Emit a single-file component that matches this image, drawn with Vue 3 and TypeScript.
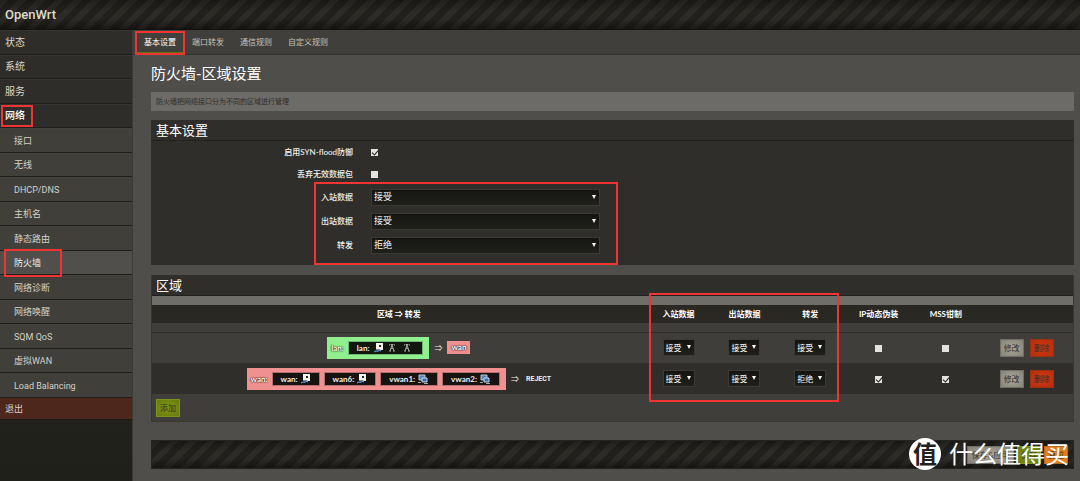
<script setup lang="ts">
import { ref } from 'vue'

interface Field { id: string; label: string; value: string }
interface Net { name: string; icons: string[] }
interface Zone {
  name: string
  kind: string
  nets: Net[]
  target: string
  badge: boolean
  policies: string[]
  masq: boolean
  mss: boolean
}

const topItems = ['状态', '系统', '服务', '网络']
const subItems = ['接口', '无线', 'DHCP/DNS', '主机名', '静态路由', '防火墙', '网络诊断', '网络唤醒', 'SQM QoS', '虚拟WAN', 'Load Balancing']
const tabs = ['基本设置', '端口转发', '通信规则', '自定义规则']
const options = ['接受', '拒绝', '丢弃']
const columns = ['入站数据', '出站数据', '转发']

const synFlood = ref(true)
const dropInvalid = ref(false)
const fields = ref<Field[]>([
  { id: 'input', label: '入站数据', value: '接受' },
  { id: 'output', label: '出站数据', value: '接受' },
  { id: 'forward', label: '转发', value: '拒绝' },
])
const zones = ref<Zone[]>([
  {
    name: 'lan', kind: 'lan', nets: [{ name: 'lan', icons: ['port', 'wifi', 'wifi'] }],
    target: 'wan', badge: true, policies: ['接受', '接受', '接受'], masq: false, mss: false,
  },
  {
    name: 'wan', kind: 'wan',
    nets: [
      { name: 'wan', icons: ['port'] },
      { name: 'wan6', icons: ['port'] },
      { name: 'vwan1', icons: ['vlan'] },
      { name: 'vwan2', icons: ['vlan'] },
    ],
    target: 'REJECT', badge: false, policies: ['接受', '接受', '拒绝'], masq: true, mss: true,
  },
])
</script>

<template>
  <div class="page">
    <header class="top"><a class="brand" href="#">OpenWrt</a></header>
    <div class="body">
      <nav class="side" aria-label="主菜单">
        <ul class="menu">
          <li v-for="t in topItems" :key="t" class="main-item">
            <a href="#" :class="{ marked: t === '网络' }">{{ t }}</a>
          </li>
          <li v-for="s in subItems" :key="s" class="sub-item" :class="{ current: s === '防火墙' }">
            <a href="#" :class="{ marked: s === '防火墙' }">{{ s }}</a>
          </li>
        </ul>
        <a class="logout" href="#">退出</a>
      </nav>

      <main class="main">
        <nav class="tabs" aria-label="防火墙">
          <a v-for="(t, i) in tabs" :key="t" href="#" :class="{ active: i === 0 }">{{ t }}</a>
        </nav>
        <div class="content">
          <h1>防火墙-区域设置</h1>
          <p class="desc">防火墙把网络接口分为不同的区域进行管理</p>

          <section class="panel">
            <h2>基本设置</h2>
            <div class="form">
              <div class="field">
                <label for="syn">启用SYN-flood防御</label>
                <input id="syn" v-model="synFlood" type="checkbox">
              </div>
              <div class="field">
                <label for="drop">丢弃无效数据包</label>
                <input id="drop" v-model="dropInvalid" type="checkbox">
              </div>
              <div v-for="f in fields" :key="f.id" class="field tall">
                <label :for="f.id">{{ f.label }}</label>
                <span class="select wide">
                  <select :id="f.id" v-model="f.value">
                    <option v-for="o in options" :key="o">{{ o }}</option>
                  </select>
                </span>
              </div>
            </div>
            <span class="frame frame-form"></span>
          </section>

          <section class="panel zones">
            <h2>区域</h2>
            <div class="bar"></div>
            <table>
              <thead>
                <tr>
                  <th class="c-zone">区域 ⇒ 转发</th>
                  <th v-for="c in columns" :key="c" class="c-policy">{{ c }}</th>
                  <th class="c-masq">IP动态伪装</th>
                  <th class="c-mss">MSS钳制</th>
                  <th class="c-act"></th>
                </tr>
              </thead>
              <tbody>
                <tr class="spacer"><td colspan="7"></td></tr>
                <tr v-for="z in zones" :key="z.name" class="zone-row">
                  <td>
                    <div class="flow">
                      <span class="zone" :class="z.kind">
                        <b>{{ z.name }}:</b>
                        <span v-for="n in z.nets" :key="n.name" class="net">
                          {{ n.name }}:
                          <template v-for="(ic, k) in n.icons" :key="k">
                            <svg v-if="ic === 'port'" viewBox="0 0 9 10" width="9" height="10">
                              <path d="M2 0h7v7H2z" fill="#f4f4ec" />
                              <path d="M5 2h2v2H5z" fill="#222" />
                              <path d="M2 6h4v1H2z" fill="#8a8a80" />
                              <path d="M0 9c2-2 3 0 4-1s2-1 3 0" fill="none" stroke="#5b8cc8" stroke-width="1.300" />
                            </svg>
                            <svg v-else-if="ic === 'wifi'" class="wifi" viewBox="0 0 8 9" width="8" height="9">
                              <path d="M2.500 1.500h3M4 2L2 8M4 2l2 6M3 5.500h2M1 8h2M5 8h2" fill="none" stroke="#aaa9a2" />
                              <path d="M1.500 1v2M6.500 1v2" stroke="#666" />
                            </svg>
                            <svg v-else viewBox="0 0 10 10" width="10" height="10">
                              <path d="M1 1h6v5H1z" fill="#5685c4" stroke="#b7c5d5" />
                              <path d="M4 4h5v4H4z" fill="#3971b8" stroke="#c8d1dc" />
                              <path d="M0 8h3v1H0zM6 9h4v1H6z" fill="#a6aaa9" />
                            </svg>
                          </template>
                        </span>
                      </span>
                      <span class="arrow">⇒</span>
                      <b v-if="z.badge" class="badge">{{ z.target }}</b>
                      <b v-else class="reject">{{ z.target }}</b>
                    </div>
                  </td>
                  <td v-for="(c, k) in columns" :key="c">
                    <span class="select small">
                      <select v-model="z.policies[k]" :aria-label="z.name + ' ' + c">
                        <option v-for="o in options" :key="o">{{ o }}</option>
                      </select>
                    </span>
                  </td>
                  <td><input v-model="z.masq" type="checkbox" :aria-label="z.name + ' IP动态伪装'"></td>
                  <td><input v-model="z.mss" type="checkbox" :aria-label="z.name + ' MSS钳制'"></td>
                  <td>
                    <div class="actions">
                      <button type="button" class="btn grey">修改</button>
                      <button type="button" class="btn red">删除</button>
                    </div>
                  </td>
                </tr>
              </tbody>
            </table>
            <div class="add"><button type="button" class="btn green">添加</button></div>
            <span class="frame frame-table"></span>
          </section>

          <footer class="foot">
            <button type="button" class="btn grey save">保存&amp;应用</button>
            <button type="button" class="btn green">保存</button>
            <button type="button" class="btn orange">复位</button>
            <div class="mark"><span class="disc">值</span><span>什么值得买</span></div>
          </footer>
        </div>
      </main>
    </div>
  </div>
</template>

<style>
body {
  margin: 0;
  background: #4f4e4a;
}
</style>

<style scoped>
* {
  box-sizing: border-box;
}
.page {
  display: flex;
  flex-direction: column;
  min-height: 100vh;
  background: #4f4e4a;
  color: #f0f0ea;
  font: 8px/12px Lato, "Noto Sans CJK SC", sans-serif;
}
a {
  color: inherit;
  text-decoration: none;
}
.top,
.foot {
  background:
    linear-gradient(180deg, rgba(0, 0, 0, 0.25), transparent 40%, transparent 65%, rgba(0, 0, 0, 0.4)),
    repeating-linear-gradient(135deg, #2c2b26 0 6px, #21201c 6px 13px);
}
.top {
  display: flex;
  align-items: center;
  height: 30px;
  padding: 0 5px;
  border-bottom: 1px solid #11110e;
}
.brand {
  font-family: Roboto, sans-serif;
  font-size: 13px;
  line-height: 18px;
  font-weight: 500;
  color: #dedccd;
}
.body {
  display: flex;
  flex: 1;
}
.side {
  width: 133px;
  flex: none;
  font-family: Roboto, "Noto Sans CJK SC", sans-serif;
  background: linear-gradient(#2a2924, #20201b);
  border-right: 1px solid #3b3a35;
}
.menu {
  list-style: none;
  margin: 0;
  padding: 0;
}
.menu li {
  display: flex;
  align-items: center;
  height: 24px;
  border-bottom: 1px solid #1f1e1a;
  border-top: 1px solid #43423d;
}
.menu li:nth-child(odd) {
  height: 25px;
}
.menu a {
  position: relative;
}
.main-item {
  padding-left: 5px;
  font-size: 10px;
  color: #dad8cd;
  background: #2e2d29;
}
.menu .main-item {
  border-top-color: #35342f;
}
.sub-item {
  padding-left: 14px;
  font-size: 8px;
  font-size: 9px;
  color: #d4d2c6;
  background: #403f3a;
}
.menu .current {
  background: #504f4b;
  border-top-color: #504f4b;
  color: #f2f1ea;
}
.main-item .marked {
  color: #fff;
  font-weight: 500;
}
.marked::after,
.tabs .active::after,
.frame {
  content: "";
  position: absolute;
  border: 2px solid #f03434;
  pointer-events: none;
}
.main-item .marked::after {
  inset: -5px -8px -5px -4px;
}
.sub-item .marked::after {
  inset: -8px -21px -8px -10px;
  z-index: 1;
}
.logout {
  display: block;
  height: 22px;
  padding-left: 5px;
  font-size: 9px;
  line-height: 22px;
  background: #4d261c;
  border-bottom: 1px solid #191813;
  color: #ddd3cb;
}
.main {
  flex: 1;
  min-width: 0;
}
.tabs {
  display: flex;
  height: 25px;
  padding-left: 3px;
  background: #403f3b;
  border-bottom: 1px solid #34332f;
}
.tabs a {
  position: relative;
  padding: 0 8px;
  line-height: 25px;
  color: #c5c3b7;
}
.tabs .active {
  color: #fff;
  border-bottom: 2px solid #5f7610;
}
.tabs .active::after {
  inset: 1px -1px -3px -1px;
}
.content {
  padding: 8px 6px 12px 18px;
}
h1 {
  margin: 0 0 9px;
  font-size: 15px;
  line-height: 20px;
  font-weight: 400;
  color: #fff;
}
.desc {
  margin: 0 0 9px;
  padding: 0 5px;
  font-size: 7px;
  line-height: 19px;
  background: #6c6b67;
  color: #2e2d2a;
}
.panel {
  position: relative;
  margin-bottom: 10px;
  background: #2f2e2a;
}
h2 {
  margin: 0;
  padding: 0 5px;
  font-size: 13px;
  line-height: 20px;
  font-weight: 400;
  color: #fff;
  border-bottom: 1px solid #22211e;
}
.form {
  padding-bottom: 8px;
}
.field {
  display: flex;
  align-items: center;
  gap: 18px;
  height: 22px;
}
.field.tall {
  height: 24px;
}
.field label {
  width: 202px;
  text-align: right;
  font-weight: 500;
}
input[type="checkbox"] {
  appearance: none;
  position: relative;
  display: inline-block;
  width: 7px;
  height: 7px;
  margin: 0;
  background: #e2e2e0;
  vertical-align: middle;
}
input[type="checkbox"]:checked::after {
  content: "";
  position: absolute;
  left: 2px;
  top: 0;
  width: 3px;
  height: 5px;
  border: solid #222;
  border-width: 0 1px 1px 0;
  transform: rotate(40deg);
}
.select {
  position: relative;
  display: inline-block;
  vertical-align: middle;
}
.select::after {
  content: "";
  position: absolute;
  top: 6px;
  right: 4px;
  border: 2px solid transparent;
  border-top: 4px solid #fff;
  border-bottom: 0;
  pointer-events: none;
}
select {
  display: block;
  appearance: none;
  width: 100%;
  height: 17px;
  margin: 0;
  padding: 0 2px;
  border: 1px solid #3b3a36;
  border-radius: 0;
  background: linear-gradient(#141410, #20201b);
  color: #fff;
  font: inherit;
}
.wide {
  width: 229px;
}
.wide select {
  font-size: 9px;
}
.small {
  width: 32px;
}
.frame-form {
  left: 163px;
  top: 62px;
  width: 304px;
  height: 83px;
}
.frame-table {
  left: 54%;
  top: 18px;
  width: calc(20% + 5px);
  height: 109px;
}
.bar {
  height: 9px;
  background: #6f6e69;
}
.zones {
  margin-bottom: 18px;
  border: solid #393834;
  border-width: 0 1px;
}
.zones h2 {
  padding-left: 4px;
}
table {
  width: 100%;
  border-collapse: collapse;
  table-layout: fixed;
  text-align: center;
}
th {
  height: 18px;
  padding: 0;
  background: #292823;
  font-weight: 700;
  color: #fff;
}
td {
  height: 31px;
  padding: 0;
}
.c-zone {
  width: 53.6%;
}
.c-policy {
  width: 7.15%;
}
.c-masq {
  width: 7.7%;
}
.c-mss {
  width: 6.9%;
}
.spacer td {
  height: 9px;
  background: #3f3e3a;
  border-bottom: 1px solid #2f2e2a;
}
.zone-row:nth-child(even) {
  background: #3f3e3a;
}
.flow {
  display: flex;
  align-items: center;
  justify-content: center;
}
.zone {
  display: flex;
  align-items: center;
  gap: 4px;
  height: 22px;
  padding: 0 6px 0 4px;
}
.zone b,
.badge {
  color: #fff;
  font-weight: 700;
  text-shadow: 0 0 2px #000, 0 0 1px #000;
}
.net {
  display: flex;
  align-items: center;
  gap: 3px;
  height: 14px;
  padding: 0 9px 0 8px;
  background: #161310;
  border: 1px solid #b07070;
  font-weight: 700;
}
.lan {
  background: #90f090;
}
.wan,
.badge {
  background: #f09090;
}
.lan .net {
  gap: 5px;
  background: #121810;
  border-color: #70b870;
}
.wifi {
  margin-right: 2px;
}
.arrow {
  margin: 0 5px;
}
.badge {
  padding: 0 4px;
  line-height: 13px;
}
.reject {
  margin-left: 2px;
  font-family: Roboto, sans-serif;
  font-size: 7px;
}
.actions {
  display: flex;
  gap: 6px;
  padding-left: 22px;
}
.btn {
  height: 18px;
  min-width: 23px;
  margin: 0;
  padding: 0 3px;
  border: 1px solid;
  font: inherit;
  color: #302f2a;
}
.grey {
  background: radial-gradient(#aba99c, #858378);
  border-color: #706f68;
}
.red {
  background: radial-gradient(#d63a10, #b32d0d);
  border-color: #9c310f;
}
.green {
  background: radial-gradient(#829b12, #66790e);
  border-color: #7c9222;
}
.orange {
  background: #e27d1d;
  border-color: #b8671c;
}
.save {
  min-width: 47px;
}
.add {
  display: flex;
  align-items: center;
  height: 28px;
  padding: 0 4px;
  background: #3f3e3a;
  border-bottom: 1px solid #373632;
}
.foot {
  position: relative;
  display: flex;
  align-items: center;
  justify-content: flex-end;
  gap: 3px;
  height: 29px;
  padding-right: 5px;
  border: 1px solid #24231f;
}
.mark {
  position: absolute;
  right: 4px;
  top: -3px;
  display: flex;
  align-items: center;
  gap: 8px;
  height: 32px;
  font-size: 24px;
  line-height: 32px;
  color: #fff;
  white-space: nowrap;
  pointer-events: none;
}
.disc {
  width: 32px;
  height: 32px;
  border-radius: 50%;
  background: #fff;
  color: #22211e;
  text-align: center;
  font-size: 24px;
  line-height: 31px;
  font-weight: 700;
}
</style>
